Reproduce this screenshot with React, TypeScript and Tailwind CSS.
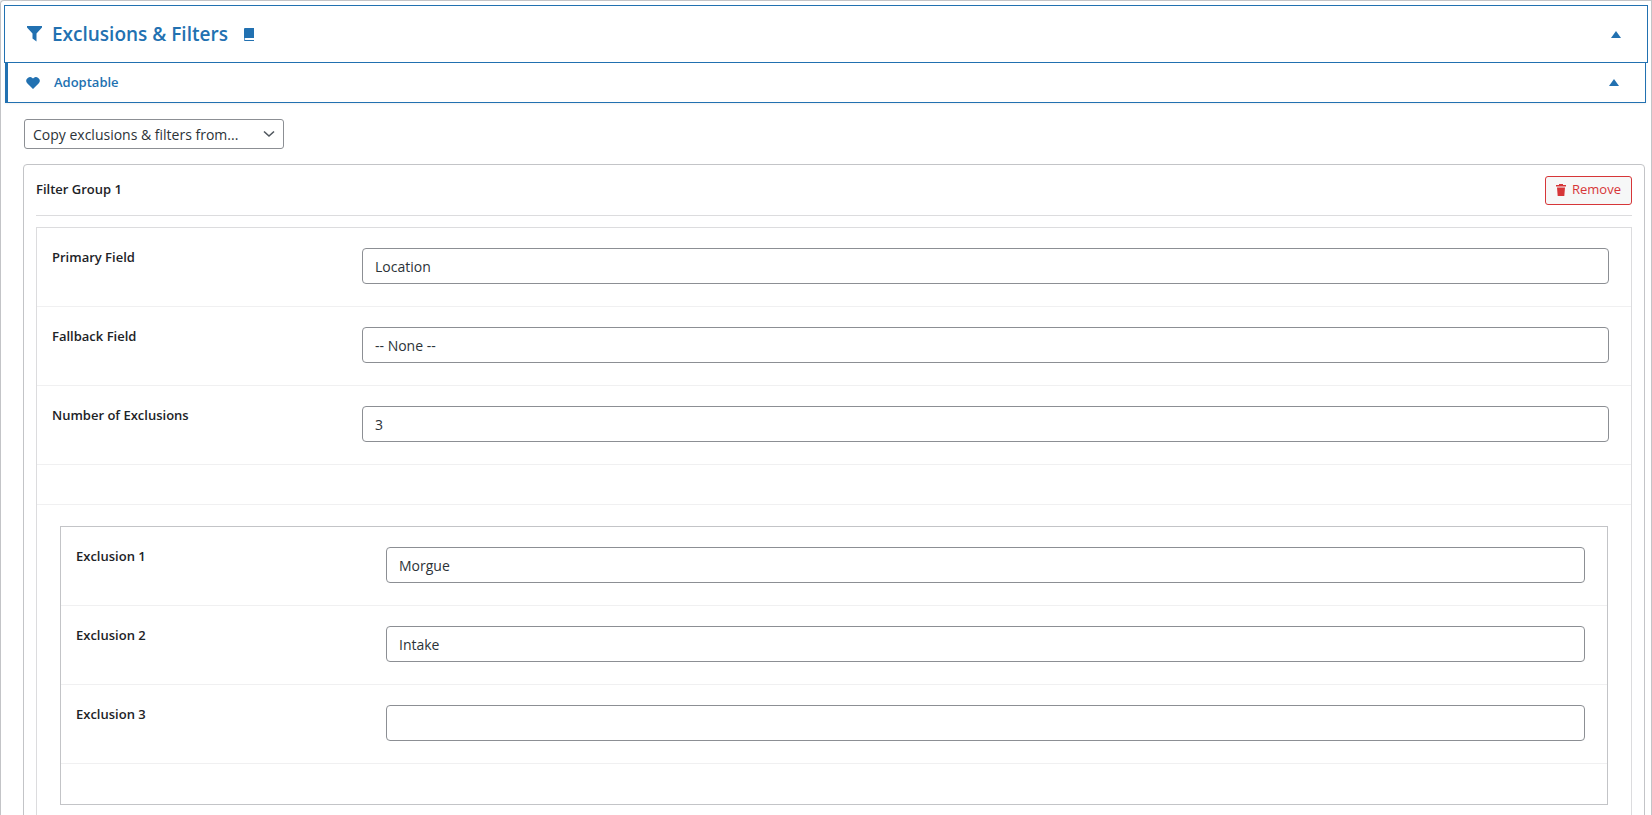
import React from "react";

const Caret = () => (
  <svg width="10" height="7" viewBox="0 0 10 7"><path d="M0 7 L5 0 L10 7Z" fill="#2271b1" /></svg>
);

const Row = ({ label, value }: { label: string; value: string }) => (
  <div className="flex items-start border-b border-[#f0f0f1] h-[79px] pt-[20px]">
    <div className="w-[325px] text-[13px] font-semibold text-[#1d2327] pt-[0px] pl-[15px]">{label}</div>
    <div className="flex-1 pr-[22px]">
      <div className="h-[36px] border border-[#8c8f94] rounded-[4px] flex items-center px-[12px] text-[14px] text-[#2c3338] bg-white">{value}</div>
    </div>
  </div>
);

export default function App() {
  return (
    <div className="w-[1652px] h-[815px] overflow-hidden bg-[#f0f0f1] relative" style={{ fontFamily: '"Open Sans", "Noto Sans", sans-serif' }}>
      <div className="absolute left-[0px] top-0 w-[1652px] h-[815px] bg-white border-l border-r border-t border-[#c3c4c7] rounded-tl-[4px]">
        <div className="ml-[3px] mr-[3px] mt-[4px] border border-[#2271b1] h-[58px] flex items-center pl-[22px] pr-[26px] bg-white">
          <svg width="15" height="16" viewBox="0 0 15 16" className="mr-[10px]"><path d="M0 0 H15 V1.5 L9.5 7.5 V15.5 L5.5 12.5 V7.5 L0 1.5Z" fill="#2271b1" /></svg>
          <span className="text-[19px] text-[#2271b1] font-semibold">Exclusions &amp; Filters</span>
          <svg width="12" height="13" viewBox="0 0 12 13" className="ml-[15px]"><path d="M1 1 a1 1 0 0 1 1-1 H11 V10 H2.5 a1 1 0 0 0 0 2 H11 V13 H2 a1 1 0 0 1-1-1Z" fill="#2271b1" /></svg>
          <div className="flex-1" />
          <Caret />
        </div>
        <div className="ml-[4px] mr-[5px] border border-[#2271b1] border-l-[3px] border-t-0 h-[40px] flex items-center pl-[18px] pr-[26px] bg-white shadow-[0_1px_2px_rgba(0,0,0,0.06)]">
          <svg width="14" height="12" viewBox="0 0 14 12" className="mr-[14px]"><path d="M7 12 L1.2 6.3 A3.3 3.3 0 0 1 7 1.6 A3.3 3.3 0 0 1 12.8 6.3Z" fill="#2271b1" /></svg>
          <span className="text-[13px] text-[#2271b1] font-semibold">Adoptable</span>
          <div className="flex-1" />
          <Caret />
        </div>
        <div className="pl-[23px] pt-[16px]">
          <div className="w-[260px] h-[30px] border border-[#8c8f94] rounded-[3px] flex items-center px-[8px] text-[14px] text-[#2c3338]">
            <span className="flex-1">Copy exclusions &amp; filters from...</span>
            <svg width="12" height="8" viewBox="0 0 12 8"><path d="M1 1.5 L6 6 L11 1.5" stroke="#50575e" strokeWidth="1.6" fill="none" /></svg>
          </div>
        </div>
        <div className="ml-[22px] mr-[6px] mt-[15px] border border-[#c3c4c7] rounded-t-[4px] h-[700px]">
          <div className="mx-[12px] h-[51px] border-b border-[#dcdcde] flex items-center">
            <span className="text-[13px] font-semibold text-[#1d2327] flex-1">Filter Group 1</span>
            <div className="h-[29px] w-[87px] border border-[#d63638] rounded-[3px] bg-[#f6f7f7] flex items-center justify-center gap-[6px] text-[13px] text-[#d63638]">
              <svg width="10" height="12" viewBox="0 0 10 12"><path d="M3 0 H7 V1 H10 V2.5 H0 V1 H3Z M1 3.5 H9 L8.3 12 H1.7Z" fill="#d63638" /></svg>
              Remove
            </div>
          </div>
          <div className="mx-[12px] mt-[11px] border border-[#dcdcde] h-[700px]">
            <Row label="Primary Field" value="Location" />
            <Row label="Fallback Field" value="-- None --" />
            <Row label="Number of Exclusions" value="3" />
            <div className="h-[40px] border-b border-[#f0f0f1]" />
            <div className="mx-[23px] mt-[21px] border border-[#c3c4c7]">
              <Row label="Exclusion 1" value="Morgue" />
              <Row label="Exclusion 2" value="Intake" />
              <Row label="Exclusion 3" value="" />
              <div className="h-[40px]" />
            </div>
          </div>
        </div>
      </div>
    </div>
  );
}
